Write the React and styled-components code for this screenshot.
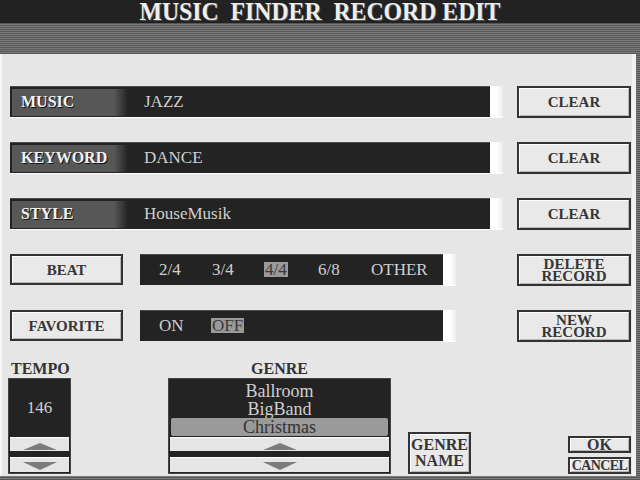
import React from "react";
import styled, { createGlobalStyle } from "styled-components";

const GlobalStyle = createGlobalStyle`
  html, body {
    margin: 0;
    padding: 0;
    background: #222;
    overflow: hidden;
  }
  * {
    box-sizing: border-box;
  }
`;

const Screen = styled.div`
  width: 640px;
  height: 480px;
  display: flex;
  flex-direction: column;
  font-family: "Liberation Serif", "Times New Roman", serif;
  background: repeating-linear-gradient(to bottom, #7a7a7a 0 1px, #575757 1px 2px);
  overflow: hidden;
`;

const TitleBar = styled.div`
  height: 23px;
  background: #222;
  display: flex;
  justify-content: center;
  align-items: center;
`;

const Title = styled.h1`
  margin: 0;
  font-size: 25px;
  line-height: 23px;
  font-weight: bold;
  color: #eeeeee;
  white-space: pre;
  transform: scaleX(0.95);
  text-shadow: 1px 1px 0 #555;
`;

const Panel = styled.div`
  margin-top: 31px;
  margin-right: 4px;
  height: 422px;
  background: #e6e6e6;
  border-left: 2px solid #f6f6f6;
  border-right: 4px solid #f2f2f2;
  padding: 32px 1px 2px 8px;
  display: flex;
  flex-direction: column;
`;

const Row = styled.div`
  display: flex;
  align-items: center;
  height: 31px;
  & + & {
    margin-top: 25px;
  }
`;

const Bar = styled.div`
  display: flex;
  align-items: center;
  height: 31px;
  width: ${(p) => p.$width}px;
  background: #232323;
  border-top: 1px solid #4a4a4a;
  box-shadow: 0 1px 0 #ffffff;
`;

const Tab = styled.div`
  width: 13px;
  height: 31px;
  background: linear-gradient(to right, #ffffff 55%, #ececec);
  box-shadow: 0 1px 0 #ffffff;
`;

const FieldLabel = styled.div`
  width: 116px;
  height: 27px;
  margin: 0 2px;
  display: flex;
  align-items: center;
  padding-left: 9px;
  background: linear-gradient(to right, #575757 0, #575757 88%, #232323 100%);
  color: #f2f2f2;
  font-size: 16px;
  font-weight: bold;
  text-shadow: 1px 1px 0 #111;
`;

const FieldValue = styled.span`
  margin-left: 14px;
  color: #cfcfcf;
  font-size: 17px;
`;

const Spacer = styled.div`
  flex: 1;
`;

const Button = styled.div`
  width: ${(p) => p.$w || 114}px;
  height: ${(p) => p.$h || 32}px;
  background: #e9e9e9;
  border: 2px solid #333;
  box-shadow: inset 1px 1px 0 #ffffff, inset -1px -1px 0 #b8b8b8;
  display: flex;
  align-items: center;
  justify-content: center;
  text-align: center;
  color: #363636;
  font-size: ${(p) => p.$size || 15}px;
  line-height: ${(p) => p.$lh || 12}px;
  font-weight: bold;
  letter-spacing: ${(p) => p.$ls || 0}px;
  white-space: pre;
`;

const Options = styled.div`
  display: flex;
  align-items: center;
  height: 31px;
  width: 303px;
  margin-left: 17px;
  padding-left: 18px;
  background: #232323;
  border-top: 1px solid #4a4a4a;
`;

const Option = styled.div`
  width: 53px;
  font-size: 17px;
  color: #cfcfcf;
  span {
    display: inline-block;
    line-height: 15px;
    padding: 0 1px;
    background: ${(p) => (p.$on ? "#9a9a9a" : "transparent")};
    color: ${(p) => (p.$on ? "#3a3a3a" : "#cfcfcf")};
  }
`;

const Bottom = styled.div`
  margin-top: auto;
  display: flex;
  align-items: flex-end;
`;

const Group = styled.div`
  display: flex;
  flex-direction: column;
  margin-left: ${(p) => p.$ml || 0}px;
`;

const GroupLabel = styled.div`
  height: 17px;
  line-height: 16px;
  font-size: 16px;
  font-weight: bold;
  color: #333;
  text-align: ${(p) => p.$align || "left"};
  padding-left: ${(p) => (p.$align === "center" ? 0 : 3)}px;
`;

const Box = styled.div`
  width: ${(p) => p.$w}px;
  height: 96px;
  background: #232323;
  border: 1px solid #444;
  padding: 2px 1px 1px;
  display: flex;
  flex-direction: column;
`;

const Display = styled.div`
  flex: 1;
  display: flex;
  align-items: center;
  justify-content: center;
  color: #cfcfcf;
  font-size: 17px;
  padding-bottom: 2px;
`;

const List = styled.div`
  flex: 1;
  display: flex;
  flex-direction: column;
  padding-top: 1px;
`;

const ListItem = styled.div`
  height: 18px;
  line-height: 18px;
  margin: 0 1px;
  text-align: center;
  font-size: 18px;
  border-radius: 2px;
  background: ${(p) => (p.$on ? "#9a9a9a" : "transparent")};
  color: ${(p) => (p.$on ? "#333" : "#cfcfcf")};
`;

const Scroll = styled.div`
  height: ${(p) => p.$h}px;
  margin-top: ${(p) => p.$mt || 0}px;
  background: #e6e6e6;
  border-top: 1px solid #ffffff;
  display: flex;
  align-items: center;
  justify-content: center;
`;

const Arrow = styled.div`
  width: 0;
  height: 0;
  border-left: 17px solid transparent;
  border-right: 17px solid transparent;
  ${(p) =>
    p.$down
      ? "border-top: 8px solid #7c7c7c; margin-top: 2px;"
      : "border-bottom: 7px solid #7c7c7c; margin-top: 3px;"}
`;

const Stack = styled.div`
  margin-left: auto;
  display: flex;
  flex-direction: column;
  gap: 4px;
`;

const TextRow = ({ label, value }) => (
  <Row>
    <Bar $width={480}>
      <FieldLabel>{label}</FieldLabel>
      <FieldValue>{value}</FieldValue>
    </Bar>
    <Tab />
    <Spacer />
    <Button>CLEAR</Button>
  </Row>
);

const OptionRow = ({ label, options, active, action }) => (
  <Row>
    <Button $w={113} $h={31}>
      {label}
    </Button>
    <Options>
      {options.map((o) => (
        <Option key={o} $on={o === active}>
          <span>{o}</span>
        </Option>
      ))}
    </Options>
    <Tab />
    <Spacer />
    <Button>{action}</Button>
  </Row>
);

const App = () => (
  <>
    <GlobalStyle />
    <Screen>
      <TitleBar>
        <Title>{"MUSIC  FINDER  RECORD EDIT"}</Title>
      </TitleBar>
      <Panel>
        <TextRow label="MUSIC" value="JAZZ" />
        <TextRow label="KEYWORD" value="DANCE" />
        <TextRow label="STYLE" value="HouseMusik" />
        <OptionRow
          label="BEAT"
          options={["2/4", "3/4", "4/4", "6/8", "OTHER"]}
          active="4/4"
          action={"DELETE\nRECORD"}
        />
        <OptionRow
          label="FAVORITE"
          options={["ON", "OFF"]}
          active="OFF"
          action={"NEW\nRECORD"}
        />
        <Bottom>
          <Group $ml={-2}>
            <GroupLabel>TEMPO</GroupLabel>
            <Box $w={63}>
              <Display>146</Display>
              <Scroll $h={14}>
                <Arrow />
              </Scroll>
              <Scroll $h={15} $mt={6}>
                <Arrow $down />
              </Scroll>
            </Box>
          </Group>
          <Group $ml={97}>
            <GroupLabel $align="center">GENRE</GroupLabel>
            <Box $w={223}>
              <List>
                <ListItem>Ballroom</ListItem>
                <ListItem>BigBand</ListItem>
                <ListItem $on>Christmas</ListItem>
              </List>
              <Scroll $h={14}>
                <Arrow />
              </Scroll>
              <Scroll $h={15} $mt={6}>
                <Arrow $down />
              </Scroll>
            </Box>
          </Group>
          <Group $ml={17}>
            <Button $w={63} $h={42} $size={16} $lh={16}>
              {"GENRE\nNAME"}
            </Button>
          </Group>
          <Stack>
            <Button $w={63} $h={17} $size={16} $lh={14}>
              OK
            </Button>
            <Button $w={63} $h={17} $size={14} $lh={14} $ls={-0.6}>
              CANCEL
            </Button>
          </Stack>
        </Bottom>
      </Panel>
    </Screen>
  </>
);

export default App;
